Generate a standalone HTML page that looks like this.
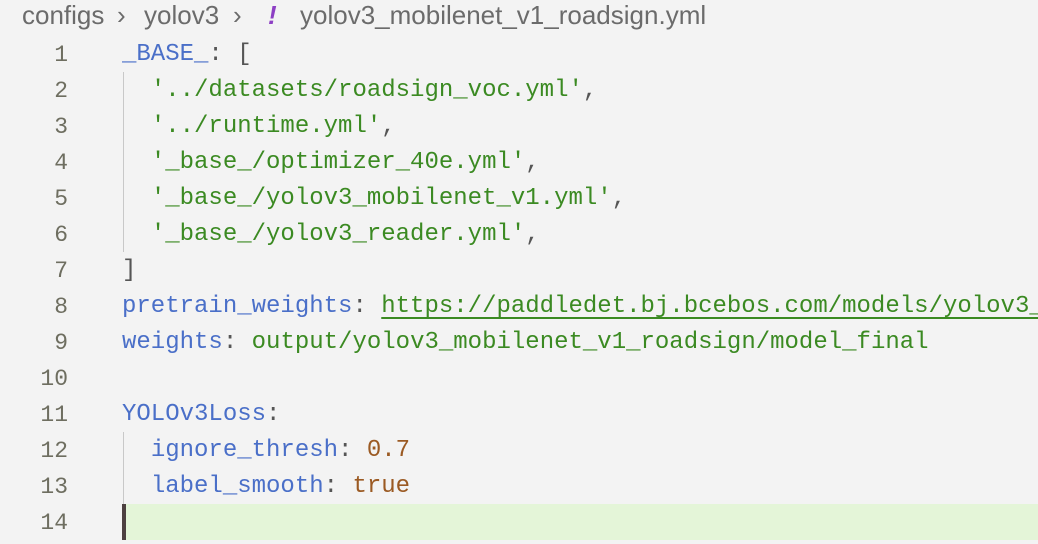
<!DOCTYPE html>
<html><head><style>
body{margin:0;width:1038px;height:544px;background:#f3f3f3;overflow:hidden;position:relative;font-family:"Liberation Mono",monospace;}
.bc{position:absolute;top:0px;font:26px "Liberation Sans",sans-serif;color:#6b6b6b;white-space:pre;}
.ex{color:#8d3fc4;font-style:italic;font-weight:bold;}
.ln{position:absolute;left:0;width:68px;text-align:right;font-size:23px;color:#6e6e60;line-height:36px;}
.cd{position:absolute;left:122px;top:37px;width:916px;overflow:hidden;font-size:24px;line-height:36px;white-space:pre;color:#555;}
.k{color:#4a6fc8}.s{color:#3b8a22}.n{color:#9b5a23}.u{color:#3b8a22;text-decoration:underline;text-underline-offset:5px}
.g{position:absolute;left:123px;width:1px;background:#c8c8c8}
</style></head><body>
<div class="bc" style="left:22px">configs</div>
<div class="bc" style="left:117px">›</div>
<div class="bc" style="left:144px">yolov3</div>
<div class="bc" style="left:233px">›</div>
<div class="bc ex" style="left:268px">!</div>
<div class="bc" style="left:300px">yolov3_mobilenet_v1_roadsign.yml</div>
<div style="position:absolute;left:122px;top:504px;width:916px;height:36px;background:#e4f5d8"></div>
<div style="position:absolute;left:122px;top:504px;width:4px;height:36px;background:#4d4040"></div>
<div class="g" style="top:72px;height:180px"></div>
<div class="g" style="top:432px;height:72px"></div>
<div class="ln" style="top:37px">1<br>2<br>3<br>4<br>5<br>6<br>7<br>8<br>9<br>10<br>11<br>12<br>13<br>14</div>
<div class="cd"><span class="k">_BASE_</span>: [
  <span class="s">'../datasets/roadsign_voc.yml'</span>,
  <span class="s">'../runtime.yml'</span>,
  <span class="s">'_base_/optimizer_40e.yml'</span>,
  <span class="s">'_base_/yolov3_mobilenet_v1.yml'</span>,
  <span class="s">'_base_/yolov3_reader.yml'</span>,
]
<span class="k">pretrain_weights</span>: <span class="u">https://paddledet.bj.bcebos.com/models/yolov3_mobilenet</span>
<span class="k">weights</span>: <span class="s">output/yolov3_mobilenet_v1_roadsign/model_final</span>

<span class="k">YOLOv3Loss</span>:
  <span class="k">ignore_thresh</span>: <span class="n">0.7</span>
  <span class="k">label_smooth</span>: <span class="n">true</span>
</div>
</body></html>
